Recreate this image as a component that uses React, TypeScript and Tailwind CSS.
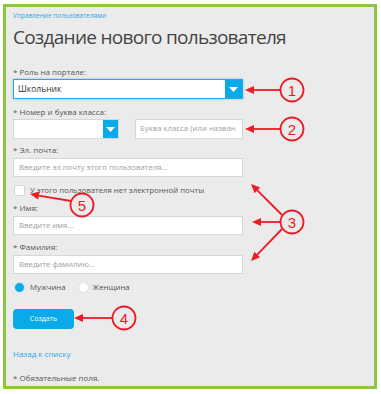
import React from 'react';

const Caret = () => (
  <svg width="9" height="5" viewBox="0 0 9 5"><path d="M0 0h9L4.5 5z" fill="#fff" /></svg>
);

const Label: React.FC<{ text: string; className?: string }> = ({ text, className }) => (
  <div className={`h-[12px] text-[8px] leading-[12px] text-[#555] ${className || ''}`}>{text}</div>
);

const TextInput: React.FC<{ placeholder: string; className?: string }> = ({ placeholder, className }) => (
  <div className={`h-[19px] w-[230px] bg-white border border-[#d6d6d6] flex items-center px-[5px] text-[7.8px] text-[#a0a0a0] whitespace-nowrap overflow-hidden ${className || ''}`}>
    {placeholder}
  </div>
);

type Note = { n: string; cx: number; cy: number; arrows: [number, number, number, number][] };

const notes: Note[] = [
  { n: '1', cx: 292, cy: 90, arrows: [[280, 90, 245, 90]] },
  { n: '2', cx: 292, cy: 129, arrows: [[280, 129, 245, 129]] },
  { n: '3', cx: 292, cy: 222, arrows: [[282, 215, 251, 184], [280, 222, 252, 222], [282, 229, 251, 261]] },
  { n: '4', cx: 124, cy: 318, arrows: [[112, 318, 74, 318]] },
  { n: '5', cx: 82, cy: 205, arrows: [[71, 201, 30, 194]] },
];

const Arrow: React.FC<{ a: [number, number, number, number] }> = ({ a }) => {
  const [x1, y1, x2, y2] = a;
  const ang = Math.atan2(y2 - y1, x2 - x1);
  const len = 9;
  const w = 4;
  const bx = x2 - Math.cos(ang) * len;
  const by = y2 - Math.sin(ang) * len;
  const px = -Math.sin(ang) * w;
  const py = Math.cos(ang) * w;
  return (
    <g>
      <line x1={x1} y1={y1} x2={bx} y2={by} stroke="#ec1c24" strokeWidth="1.8" />
      <polygon points={`${x2},${y2} ${bx + px},${by + py} ${bx - px},${by - py}`} fill="#ec1c24" />
    </g>
  );
};

export default function App() {
  return (
    <div className="relative w-[381px] h-[394px] bg-white overflow-hidden" style={{ fontFamily: '"Open Sans", "Noto Sans", sans-serif' }}>
      <div className="pt-[4px] pl-[3px]">
        <div className="w-[374px] h-[385px] border-[3px] border-[#8dc63f] bg-[#ebebeb] pl-[7px] pt-[2px]">
          <div className="h-[14px] text-[6.5px] leading-[14px] text-[#29a9e1]">Управление пользователями</div>
          <div className="mt-[0px] h-[28px] text-[19px] leading-[28px] text-[#444] tracking-[-0.7px] whitespace-nowrap">Создание нового пользователя</div>

          <Label text="* Роль на портале:" className="mt-[15px]" />
          <div className="mt-[1px] h-[20px] w-[230px] flex bg-white border border-[#29a9e1] shadow-[0_0_2px_rgba(41,169,225,0.6)]">
            <div className="flex-1 flex items-center px-[4px] text-[8.5px] text-[#333]">Школьник</div>
            <div className="w-[17px] bg-[#0aa9e8] flex items-center justify-center"><Caret /></div>
          </div>

          <Label text="* Номер и буква класса:" className="mt-[7px]" />
          <div className="mt-[1px] h-[20px] flex">
            <div className="w-[106px] flex bg-white border border-[#d6d6d6]">
              <div className="flex-1" />
              <div className="w-[15px] bg-[#0aa9e8] flex items-center justify-center"><Caret /></div>
            </div>
            <div className="ml-[16px] w-[108px] bg-white border border-[#d6d6d6] flex items-center px-[4px] text-[7.8px] text-[#a0a0a0] whitespace-nowrap overflow-hidden">Буква класса (или назван</div>
          </div>

          <Label text="* Эл. почта:" className="mt-[5px]" />
          <TextInput placeholder="Введите эл.почту этого пользователя..." className="mt-[2px]" />

          <div className="mt-[8px] h-[11px] flex items-center">
            <div className="w-[11px] h-[11px] bg-white border border-[#d6d6d6] rounded-[2px] ml-[1px]" />
            <div className="ml-[5px] text-[7.8px] leading-[11px] text-[#555]">У этого пользователя нет электронной почты</div>
          </div>

          <Label text="* Имя:" className="mt-[6px]" />
          <TextInput placeholder="Введите имя..." className="mt-[2px]" />

          <Label text="* Фамилия:" className="mt-[6px]" />
          <TextInput placeholder="Введите фамилию..." className="mt-[2px]" />

          <div className="mt-[8px] h-[11px] flex items-center text-[7.8px] text-[#555]">
            <div className="ml-[1px] w-[11px] h-[11px] rounded-full bg-[#0aa9e8] border border-[#d8eef8]" />
            <div className="ml-[5px]">Мужчина</div>
            <div className="ml-[12px] w-[11px] h-[11px] rounded-full bg-white border border-[#e0e0e0]" />
            <div className="ml-[4px]">Женщина</div>
          </div>

          <div className="mt-[16px] w-[61px] h-[20px] rounded-[4px] bg-[#0aa9e8] flex items-center justify-center text-[7px] text-white">Создать</div>

          <div className="mt-[19px] h-[12px] text-[8px] leading-[12px] text-[#29a9e1]">Назад к списку</div>
          <div className="mt-[12px] h-[12px] text-[8px] leading-[12px] text-[#555]">* Обязательные поля.</div>
        </div>
      </div>

      <svg className="absolute inset-0 pointer-events-none" width="381" height="394" viewBox="0 0 381 394">
        {notes.map((nt) => (
          <g key={nt.n}>
            {nt.arrows.map((a, i) => <Arrow key={i} a={a} />)}
            <circle cx={nt.cx} cy={nt.cy} r="11.5" fill="none" stroke="#ec1c24" strokeWidth="1.8" />
            <text x={nt.cx} y={nt.cy + 5.5} textAnchor="middle" fontSize="15" fill="#ec1c24" fontFamily='"Liberation Sans", Arial, sans-serif'>{nt.n}</text>
          </g>
        ))}
      </svg>
    </div>
  );
}
